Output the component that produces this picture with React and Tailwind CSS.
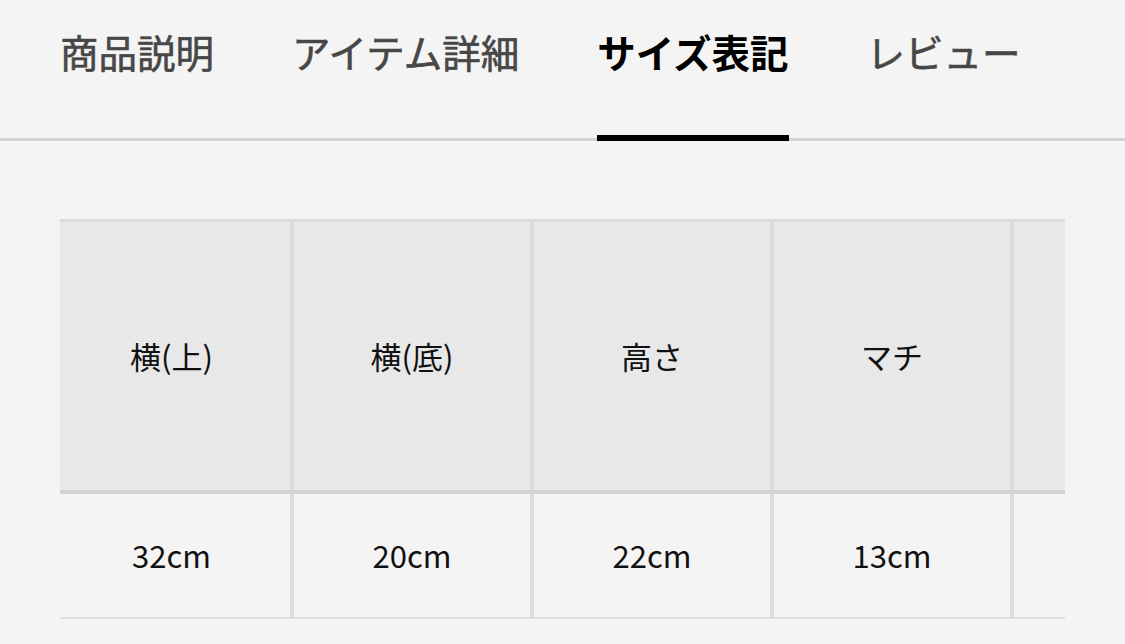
import React from "react";

const tabs = ["商品説明", "アイテム詳細", "サイズ表記", "レビュー"];
const columns = [
  { label: "横(上)", value: "32cm" },
  { label: "横(底)", value: "20cm" },
  { label: "高さ", value: "22cm" },
  { label: "マチ", value: "13cm" },
  { label: "", value: "" },
];

export default function App() {
  const active = "サイズ表記";
  return (
    <div
      className="w-[1125px] h-[644px] overflow-hidden bg-[#f4f4f4]"
      style={{ fontFamily: '"Noto Sans CJK JP", "Noto Sans", sans-serif' }}
    >
      {/* tabs */}
      <nav className="h-[141px] border-b-[3px] border-[#d3d3d3] pl-[60px] flex gap-[78px]">
        {tabs.map((tab) => (
          <div key={tab} className="relative h-full pt-[31px]">
            <span
              className={`text-[38.5px] leading-[40px] ${
                tab === active
                  ? "text-black font-bold"
                  : "text-[#474747] font-normal [-webkit-text-stroke:0.6px_#474747]"
              }`}
            >
              {tab}
            </span>
            {tab === active && (
              <div className="absolute left-0 right-0 bottom-[-3px] h-[6px] bg-black" />
            )}
          </div>
        ))}
      </nav>

      {/* size table */}
      <div className="mt-[78px] mx-[60px] overflow-hidden">
        <div className="w-max border-t-[3px] border-[#dcdcdc]">
          <div className="flex bg-[#e8e8e8] border-b-[4px] border-[#d2d2d2]">
            {columns.map((col, i) => (
              <div
                key={i}
                className={`${
                  i === 0 ? "w-[234px] pr-[7px]" : "w-[240px]"
                } h-[268px] border-r-[4px] border-[#dcdcdc] flex items-center justify-center text-[31px] text-[#111]`}
              >
                {col.label}
              </div>
            ))}
          </div>
          <div className="flex border-b-[2px] border-[#dedede]">
            {columns.map((col, i) => (
              <div
                key={i}
                className={`${
                  i === 0 ? "w-[234px] pr-[7px]" : "w-[240px]"
                } h-[123px] border-r-[4px] border-[#dedede] flex items-center justify-center text-[31px] text-[#111]`}
              >
                {col.value}
              </div>
            ))}
          </div>
        </div>
      </div>
    </div>
  );
}
